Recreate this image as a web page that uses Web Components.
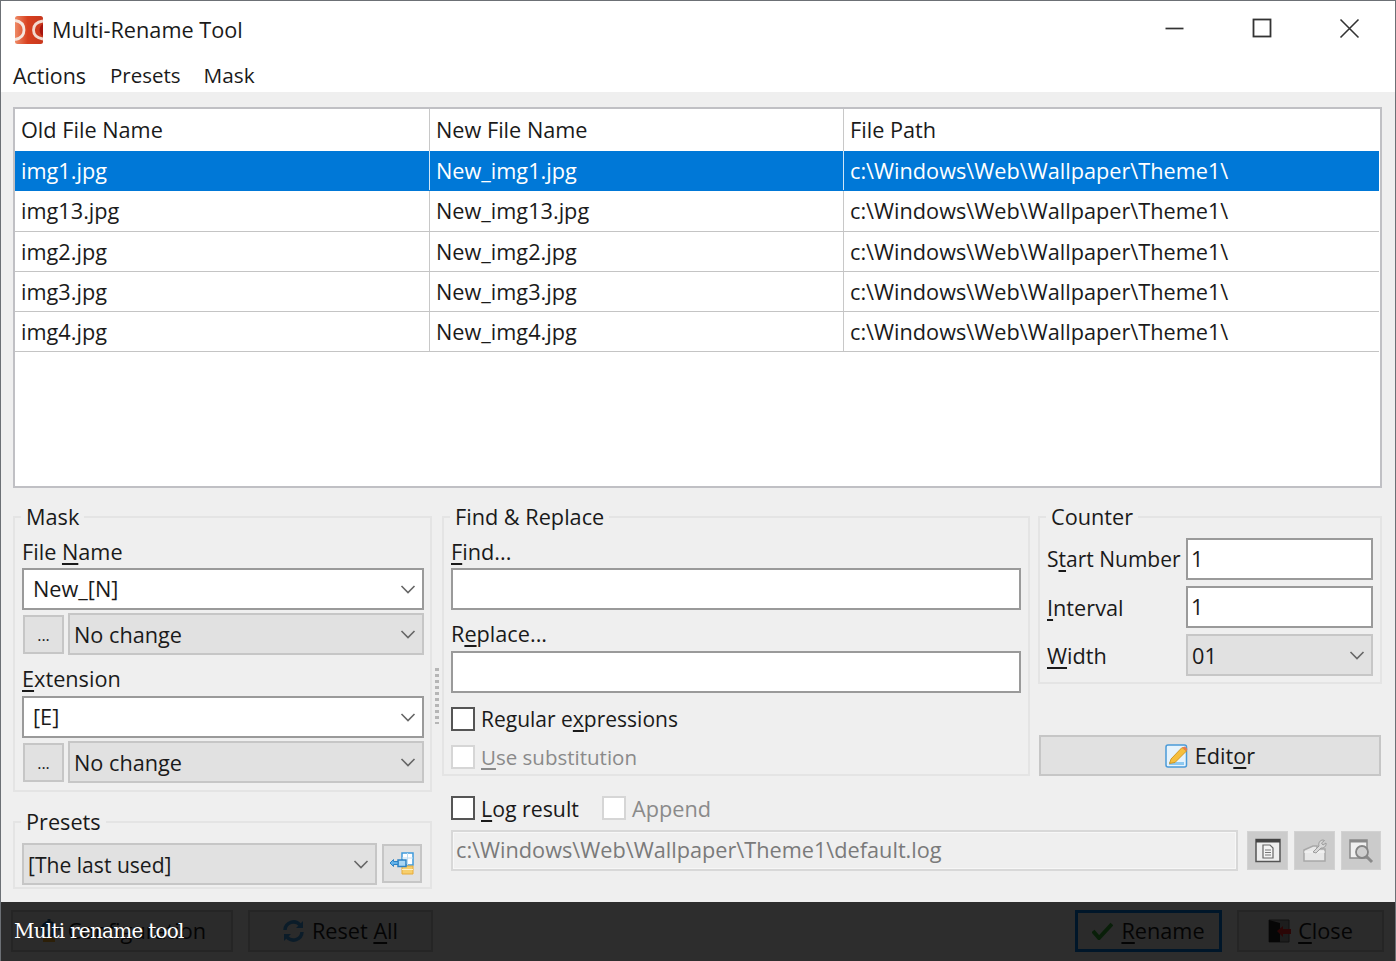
<!DOCTYPE html>
<html><head><meta charset="utf-8"><style>
html,body{margin:0;padding:0;width:1396px;height:961px;overflow:hidden;background:#efefef}
body{font-family:"Open Sans","Noto Sans",sans-serif;font-size:21.7px;color:#1a1a1a}
u{text-underline-offset:3px}
.row2{display:grid;grid-template-columns:46px 1fr}
.f{margin-top:1px}
</style></head><body>
<template id="t-app"><style>
:host{display:flex;flex-direction:column;width:1396px;height:961px;box-sizing:border-box;position:relative;border:1px solid #6c7075;border-bottom:0;background:#efefef;overflow:hidden}
.main{flex:1;display:flex;flex-direction:column;padding:15px 13px 0 12px}
.bottom{display:grid;grid-template-columns:419px 10px 1fr;margin-top:28px}
.left{display:flex;flex-direction:column;gap:29px}
.grip{padding-top:152px}
.grip i{display:block;width:4px;height:56px;margin-left:3px;background:repeating-linear-gradient(#b6b6b6 0 3px,transparent 3px 6px)}
.work{display:flex;flex-direction:column}
.up{display:grid;grid-template-columns:588px 344px;column-gap:8px}
</style><slot name="title"></slot><div class="main"><slot name="table"></slot><div class="bottom"><div class="left"><slot name="mask"></slot><slot name="presets"></slot></div><div class="grip"><i></i></div><div class="work"><div class="up"><slot name="find"></slot><slot name="counter"></slot></div><slot name="log"></slot></div></div><slot name="footer"></slot></div><slot name="overlay"></slot></template>

<template id="t-titlebar"><style>
:host{display:block;background:#fff;height:91px;flex:none}
.top{display:flex;align-items:center;height:57px;padding-left:14px}
.t{margin-left:9px;color:#1a1a1a;flex:1}
.c{display:flex;margin-right:2px}
.c svg{width:87.5px;height:30px;display:block}
nav{display:flex;padding-left:12px;height:34px;align-items:center;font-size:20.8px}
nav span:nth-child(1){font-size:21.4px;margin-right:24px}
nav span:nth-child(2){font-size:20.5px;margin-right:23px}
</style><div class="top"><svg width="28" height="28" viewBox="0 0 28 28"><defs><linearGradient id="lg" x1="0" x2="1" y1="0" y2="0"><stop offset="0" stop-color="#ee8a66"/><stop offset=".45" stop-color="#d8401f"/><stop offset="1" stop-color="#c8381e"/></linearGradient></defs><rect width="28" height="28" rx="2.5" fill="url(#lg)"/><path d="M28 8a7 7 0 0 0 0 12z" fill="#a8140e"/><path d="M0 4.500C6 5.500 9 9 9 14S6 22.500 0 23.500" fill="none" stroke="#f6e6de" stroke-width="2.800"/><path d="M28 5C22 6 18.500 9.500 18.500 14S22 22 28 23" fill="none" stroke="#f3d9cf" stroke-width="2.800"/></svg><span class="t">Multi-Rename Tool</span><div class="c">
<svg viewBox="0 0 87.500 30"><path d="M34.500 13.500h18" stroke="#333" stroke-width="1.700"/></svg>
<svg viewBox="0 0 87.500 30"><rect x="35.500" y="4.500" width="17" height="17" fill="none" stroke="#333" stroke-width="1.800"/></svg>
<svg viewBox="0 0 87.500 30"><path d="M34.500 4.500l18 18M52.500 4.500l-18 18" stroke="#333" stroke-width="1.600"/></svg>
</div></div><nav><span>Actions</span><span>Presets</span><span>Mask</span></nav></template>

<template id="t-table"><style>
:host{display:block;height:381px;box-sizing:border-box;background:#fff;border:2px solid #c0c0c4;padding-right:1px;flex:none}
</style><slot></slot></template>

<template id="t-row"><style>
:host{display:grid;grid-template-columns:415px 414px 1fr;height:40.3px;box-sizing:border-box;border-bottom:1.500px solid #c4c4c4;line-height:39px}
:host([head]){height:42px;border-bottom:0;line-height:42px}
:host([sel]){background:#0078d7;color:#fff;border-bottom-color:#0078d7}
span{padding-left:6px;border-right:1px solid #c8c8c8;white-space:nowrap;overflow:hidden}
span:first-child{padding-left:7px}
:host([sel]) span{border-right-color:#cfe6f7}
span:last-child{border-right:0}
</style><span><slot name="a"></slot></span><span><slot name="b"></slot></span><span><slot name="c"></slot></span></template>

<template id="t-group"><style>
:host{display:block;position:relative;box-sizing:border-box;border:2px solid #e4e4e4;padding:19px 6px 0 7px}
.l{position:absolute;top:-16px;left:6px;background:#efefef;padding:0 5px;line-height:30px;height:30px;white-space:nowrap}
</style><span class="l"><slot name="legend"></slot></span><slot></slot></template>

<template id="t-combo"><style>
:host{display:flex;align-items:center;box-sizing:border-box;height:42px;border:2px solid #9a9a9a;background:#fff;padding:0 6px 0 9px;line-height:38px}
:host([grey]){background:#e1e1e1;border-color:#c6c6c6;padding-left:4px}
:host([grey]) .v{padding-top:2px;line-height:36px}
:host([plain]) svg{display:none}
.v{flex:1;white-space:nowrap;overflow:hidden}
svg{width:16px;height:10px;flex:none}
</style><span class="v"><slot></slot></span><svg viewBox="0 0 16 10"><path d="M1.500 2l6.500 6.500L14.500 2" fill="none" stroke="#666" stroke-width="1.600"/></svg></template>

<template id="t-btn"><style>
:host{display:flex;align-items:center;justify-content:center;gap:6px;box-sizing:border-box;height:42px;background:#e1e1e1;border:2px solid #c6c6c6;line-height:38px;white-space:nowrap;flex:none}
</style><slot></slot></template>

<template id="t-check"><style>
:host{display:flex;align-items:center;gap:6px;height:30px;white-space:nowrap}
b{display:block;width:24px;height:24px;box-sizing:border-box;border:2px solid #555;background:#fff;flex:none}
:host([dis]){color:#8a8a8a}
:host([dis]) b{border-color:#d6d6d6}
</style><b></b><span><slot></slot></span></template>

<template id="t-lbl"><style>
:host{display:block;height:30px;line-height:30px;white-space:nowrap}
</style><slot></slot></template>

<template id="t-logrow"><style>
:host{display:block;padding:20px 1px 0 9px}
.a{display:flex;height:24px;align-items:center}
.b{display:flex;align-items:flex-start;margin-top:10px}
.p{width:787px;height:41px;box-sizing:border-box;border:2px solid #d8d8d8;box-shadow:inset 0 0 0 1px #f7f7f7;color:#7a7a7a;padding-left:3px;line-height:35px;white-space:nowrap;margin-right:9px}
.ic{display:flex;gap:6px;margin-top:1px}
</style><div class="a"><slot name="checks"></slot></div><div class="b"><div class="p"><slot name="path"></slot></div><div class="ic"><slot name="icons"></slot></div></div></template>

<template id="t-icon"><style>
:host{display:flex;align-items:center;justify-content:center;width:41px;height:39px;background:#cbcbcb;border:1px solid #d2d2d2;box-sizing:border-box}
</style><slot></slot></template>

<template id="t-footer"><style>
:host{display:flex;justify-content:space-between;margin:21px -2px 0 -2px}
div{display:flex;gap:15px}
</style><div><slot name="l"></slot></div><div><slot name="r"></slot></div></template>

<template id="t-caption"><style>
:host{position:absolute;left:0;right:0;bottom:0;height:59px;background:rgba(0,0,0,.81);color:#fff;box-sizing:border-box;padding-left:13px;font-family:"DejaVu Serif","Liberation Serif",serif;font-size:20px;letter-spacing:-.75px;line-height:58px}
</style><slot></slot></template>

<script>
for(const [n,t] of [['app-window','t-app'],['title-bar','t-titlebar'],['file-table','t-table'],['file-row','t-row'],['group-box','t-group'],['combo-box','t-combo'],['push-btn','t-btn'],['check-box','t-check'],['field-label','t-lbl'],['log-row','t-logrow'],['icon-btn','t-icon'],['foot-bar','t-footer'],['video-caption','t-caption']]){
customElements.define(n,class extends HTMLElement{constructor(){super();this.attachShadow({mode:'open'}).appendChild(document.getElementById(t).content.cloneNode(true))}})}
</script>

<app-window>
<title-bar slot="title"></title-bar>
<file-table slot="table">
<file-row head><span slot="a">Old File Name</span><span slot="b">New File Name</span><span slot="c">File Path</span></file-row>
<file-row sel><span slot="a">img1.jpg</span><span slot="b">New_img1.jpg</span><span slot="c">c:\Windows\Web\Wallpaper\Theme1\</span></file-row>
<file-row><span slot="a">img13.jpg</span><span slot="b">New_img13.jpg</span><span slot="c">c:\Windows\Web\Wallpaper\Theme1\</span></file-row>
<file-row><span slot="a">img2.jpg</span><span slot="b">New_img2.jpg</span><span slot="c">c:\Windows\Web\Wallpaper\Theme1\</span></file-row>
<file-row><span slot="a">img3.jpg</span><span slot="b">New_img3.jpg</span><span slot="c">c:\Windows\Web\Wallpaper\Theme1\</span></file-row>
<file-row><span slot="a">img4.jpg</span><span slot="b">New_img4.jpg</span><span slot="c">c:\Windows\Web\Wallpaper\Theme1\</span></file-row>
</file-table>

<group-box slot="mask" style="height:276px"><span slot="legend">Mask</span>
<field-label>File <u>N</u>ame</field-label>
<combo-box class="f">New_[N]</combo-box>
<div class="row2" style="margin-top:3px"><push-btn style="height:39px;width:41px;margin:2px 0 0 1px;font-size:16px">...</push-btn><combo-box grey>No change</combo-box></div>
<field-label style="margin-top:9px"><u>E</u>xtension</field-label>
<combo-box style="margin-top:2px">[E]</combo-box>
<div class="row2" style="margin-top:3px"><push-btn style="height:39px;width:41px;margin:2px 0 0 1px;font-size:16px">...</push-btn><combo-box grey>No change</combo-box></div>
</group-box>

<group-box slot="presets" style="height:68px;padding-top:20px"><span slot="legend">Presets</span>
<div style="display:grid;grid-template-columns:355px 41px;gap:5px;font-size:21.100px"><combo-box grey>[The last used]</combo-box><push-btn style="height:39px;width:40px;margin-top:1px"><svg width="26" height="26" viewBox="0 0 26 26"><path d="M13 2h11v12H13z" fill="#fff" stroke="#3f9bdc" stroke-width="1.500"/><path d="M18.500 2v12M13 7h11" stroke="#bcdcf2"/><path d="M13 15h11v8H13z" fill="#f7cf6c" stroke="#e7ab3a"/><path d="M13 18.500h11" stroke="#fff1c8"/><rect x="9" y="9" width="8" height="6.500" fill="#a8d6f4" stroke="#2d82c4" stroke-width="1.500"/><path d="M1 12l3.500-3.500V10.500H9v3H4.500v2z" fill="#62b2ea" stroke="#2d82c4"/></svg></push-btn></div>
</group-box>

<group-box slot="find" style="height:260px;padding-right:7px"><span slot="legend">Find &amp; Replace</span>
<field-label><u>F</u>ind...</field-label>
<combo-box plain class="f"></combo-box>
<field-label style="margin-top:9px">R<u>e</u>place...</field-label>
<combo-box plain style="margin-top:2px"></combo-box>
<check-box style="margin-top:11px;font-size:21px">Regular e<u>x</u>pressions</check-box>
<check-box dis style="margin-top:8px;font-size:20.500px"><u>U</u>se substitution</check-box>
</group-box>

<div slot="counter">
<group-box style="height:168px;padding:20px 7px 0 7px"><span slot="legend">Counter</span>
<div style="display:grid;grid-template-columns:139px 187px;row-gap:6px;align-items:center">
<span style="font-size:21px;white-space:nowrap">S<u>t</u>art Number</span><combo-box plain style="padding-left:3px">1</combo-box>
<span><u>I</u>nterval</span><combo-box plain style="padding-left:3px">1</combo-box>
<span><u>W</u>idth</span><combo-box grey>01</combo-box>
</div></group-box>
<push-btn style="margin:51px 1px 0;height:41px"><svg width="24" height="24" viewBox="0 0 24 24"><rect x="1" y="1" width="20.500" height="22" rx="2" fill="#e6f3fc" stroke="#4a9ad8" stroke-width="1.500"/><path d="M4 18h15v3H4z" fill="#8cc8f0"/><path d="M6 15L17 3.500 21.500 7 10 18.500l-5.500 1z" fill="#f6bf3d" stroke="#c98a10" stroke-width=".8"/><path d="M17 3.500L21.500 7l1-2-2.500-2.500z" fill="#e87a50"/></svg><span style="padding-top:1px">Edit<u>o</u>r</span></push-btn>
</div>

<log-row slot="log">
<check-box slot="checks" style="width:151px;flex:none;font-size:21.300px"><u>L</u>og result</check-box>
<check-box slot="checks" dis>Append</check-box>
<span slot="path">c:\Windows\Web\Wallpaper\Theme1\default.log</span>
<icon-btn slot="icons"><svg width="26" height="25" viewBox="0 0 26 25"><rect x="1" y="1.500" width="24" height="22" fill="#eee" stroke="#555" stroke-width="1.500"/><path d="M1 1h24v3.500H1z" fill="#444"/><path d="M8 7h7l3 3v10H8z" fill="#f4f4f4" stroke="#666" stroke-width="1.200"/><path d="M10 12h6M10 14.500h6M10 17h6" stroke="#777"/></svg></icon-btn>
<icon-btn slot="icons"><svg width="26" height="25" viewBox="0 0 26 25"><path d="M2 12l9-4h4v3h8v12H2z" fill="#e8e8e8" stroke="#a8a8a8" stroke-width="1.500"/><path d="M2 14h21" stroke="#f6f6f6"/><path d="M11 14l6-6c-1-3 1-6 4-6l1.500.5-3 2.500 1.500 2 3-2c.6 3-2 5.500-5 5l-5 5z" fill="#d8d8d8" stroke="#9c9c9c"/></svg></icon-btn>
<icon-btn slot="icons" style="width:40px"><svg width="26" height="26" viewBox="0 0 26 26"><path d="M2 2h17v18H2z" fill="#f0f0f0" stroke="#8a8a8a" stroke-width="1.500"/><path d="M2 2h17v2.500H2z" fill="#8a8a8a"/><circle cx="14" cy="14" r="6" fill="#cfcfcf" stroke="#858585" stroke-width="1.800"/><path d="M18.500 18.500l5.500 5.500" stroke="#8a8a8a" stroke-width="3"/></svg></icon-btn>
</log-row>

<foot-bar slot="footer">
<push-btn slot="l" style="width:222px;gap:8px"><svg width="22" height="24" viewBox="0 0 22 24"><circle cx="11" cy="10" r="7" fill="#3a8fd0" stroke="#1c5d92" stroke-width="2"/><circle cx="11" cy="10" r="2.500" fill="#cfe6f7"/><path d="M11 0v3M11 17v3M2 10h-2M22 10h-2" stroke="#1c5d92" stroke-width="3"/><path d="M5 19h12v4H5z" fill="#e6a52c"/></svg><span>Confi<u>g</u>uration</span></push-btn>
<push-btn slot="l" style="width:185px;gap:8px"><svg width="21" height="24" viewBox="0 0 21 24"><path d="M2 11A8.500 8.500 0 0 1 17 6" fill="none" stroke="#3c95d8" stroke-width="3.500"/><path d="M13 9h7V2z" fill="#3c95d8"/><path d="M19 13A8.500 8.500 0 0 1 4 18" fill="none" stroke="#3c95d8" stroke-width="3.500"/><path d="M8 15H1v7z" fill="#3c95d8"/></svg><span>Reset <u>A</u>ll</span></push-btn>
<push-btn slot="r" style="width:147px;gap:8px;border:3px solid #0078d7"><svg width="21" height="18" viewBox="0 0 21 18"><path d="M1 9l6 7L20 2" fill="none" stroke="#33a533" stroke-width="4"/></svg><span><u>R</u>ename</span></push-btn>
<push-btn slot="r" style="width:147px"><svg width="24" height="24" viewBox="0 0 24 24"><path d="M1 1h20v22H1z" fill="#9c9c9c" stroke="#5a5a5a"/><path d="M1 1l11 3v19H1z" fill="#222"/><path d="M9 12l6-5v3h8v5h-8v3z" fill="#e32020"/></svg><span><u>C</u>lose</span></push-btn>
</foot-bar>

<video-caption slot="overlay">Multi rename tool</video-caption>
</app-window>
</body></html>
